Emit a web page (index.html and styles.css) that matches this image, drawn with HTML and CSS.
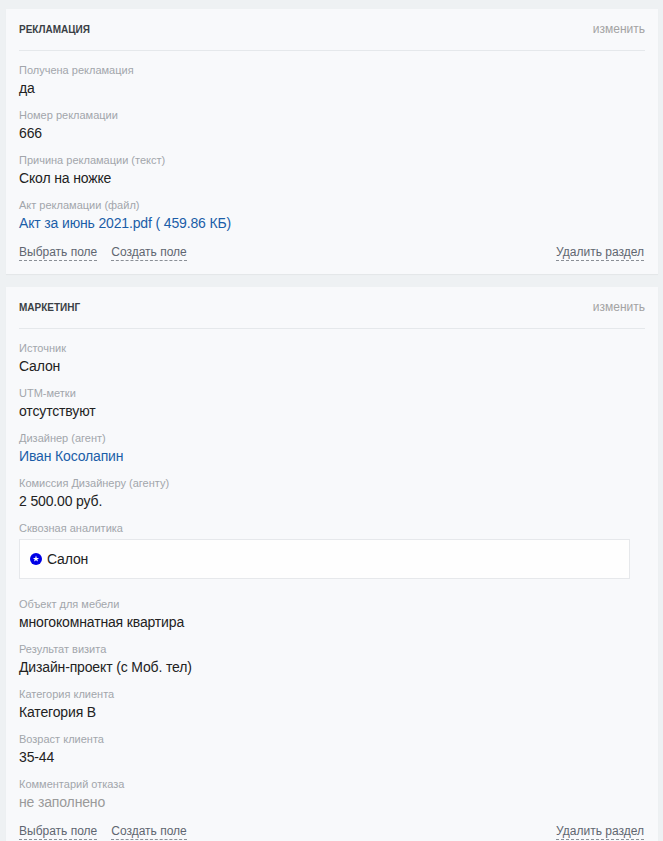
FILE: index.html
```html
<!DOCTYPE html>
<html>
<head lang="ru">
    <meta charset="UTF-8">
    <title>Карточка</title>
    <link rel="stylesheet" href="styles.css">
</head>
<body>
<div class="page">
    <!--рекламация-->
    <div class="card">
        <div class="card-head">
            <span class="card-title">Рекламация</span>
            <a class="edit">изменить</a>
        </div>
        <div class="fields">
            <div class="field">
                <div class="label">Получена рекламация</div>
                <div class="value">да</div>
            </div>
            <div class="field">
                <div class="label">Номер рекламации</div>
                <div class="value">666</div>
            </div>
            <div class="field">
                <div class="label">Причина рекламации (текст)</div>
                <div class="value">Скол на ножке</div>
            </div>
            <div class="field">
                <div class="label">Акт рекламации (файл)</div>
                <div class="value link">Акт за июнь 2021.pdf ( 459.86 КБ)</div>
            </div>
        </div>
        <div class="actions">
            <div class="actions-left">
                <a class="dashed">Выбрать поле</a>
                <a class="dashed">Создать поле</a>
            </div>
            <a class="dashed">Удалить раздел</a>
        </div>
    </div>

    <!--маркетинг-->
    <div class="card">
        <div class="card-head">
            <span class="card-title">Маркетинг</span>
            <a class="edit">изменить</a>
        </div>
        <div class="fields">
            <div class="field">
                <div class="label">Источник</div>
                <div class="value">Салон</div>
            </div>
            <div class="field">
                <div class="label">UTM-метки</div>
                <div class="value">отсутствуют</div>
            </div>
            <div class="field">
                <div class="label">Дизайнер (агент)</div>
                <div class="value link">Иван Косолапин</div>
            </div>
            <div class="field">
                <div class="label">Комиссия Дизайнеру (агенту)</div>
                <div class="value">2 500.00 руб.</div>
            </div>
            <div class="field field-box">
                <div class="label">Сквозная аналитика</div>
                <div class="source-box">
                    <svg class="source-icon" width="12" height="12" viewBox="0 0 12 12">
                        <circle cx="6" cy="6" r="6" fill="#0000e6"/>
                        <polygon points="6,2.6 6.8,4.9 9.2,4.9 7.3,6.3 8,8.6 6,7.2 4,8.6 4.7,6.3 2.8,4.9 5.2,4.9" fill="#fff"/>
                    </svg>
                    <span>Салон</span>
                </div>
            </div>
            <div class="field">
                <div class="label">Объект для мебели</div>
                <div class="value">многокомнатная квартира</div>
            </div>
            <div class="field">
                <div class="label">Результат визита</div>
                <div class="value">Дизайн-проект (с Моб. тел)</div>
            </div>
            <div class="field">
                <div class="label">Категория клиента</div>
                <div class="value">Категория B</div>
            </div>
            <div class="field">
                <div class="label">Возраст клиента</div>
                <div class="value">35-44</div>
            </div>
            <div class="field">
                <div class="label">Комментарий отказа</div>
                <div class="value empty">не заполнено</div>
            </div>
        </div>
        <div class="actions">
            <div class="actions-left">
                <a class="dashed">Выбрать поле</a>
                <a class="dashed">Создать поле</a>
            </div>
            <a class="dashed">Удалить раздел</a>
        </div>
    </div>
</div>
</body>
</html>
```

FILE: styles.css
```css
*{
    margin:0;
    padding:0;
    box-sizing:border-box;
}
body{
    background-color:#eef1f3;
    font-family:"Liberation Sans", Arial, sans-serif;
    color:#222;
}
.page{
    padding:9px 5px 0 6px;
}
.card{
    background-color:#f8f9fb;
    padding:0 13px 13px;
    margin-bottom:13px;
    box-shadow:0 1px 1px rgba(0,0,0,.04);
}
.card-head{
    height:42px;
    display:flex;
    justify-content:space-between;
    align-items:center;
    border-bottom:1px solid #e5e8eb;
    padding-bottom:1px;
}
.card-title{
    font-size:10px;
    font-weight:bold;
    text-transform:uppercase;
    color:#3a3f45;
}
.edit{
    font-size:12px;
    color:#a3a3a3;
    cursor:pointer;
}
.fields{
    padding-top:12px;
}
.field{
    margin-bottom:10px;
}
.label{
    font-size:11px;
    line-height:15px;
    color:#a2a6ab;
}
.value{
    font-size:14px;
    line-height:20px;
    letter-spacing:-0.15px;
    color:#222;
}
.value.link{
    color:#1b5ea8;
}
.value.empty{
    color:#9a9a9a;
}
.field-box{
    margin-bottom:18px;
}
.source-box{
    margin-top:3px;
    width:611px;
    height:40px;
    background-color:#fefefe;
    border:1px solid #e6e8eb;
    display:flex;
    align-items:center;
    padding-left:10px;
    font-size:14px;
    letter-spacing:-0.15px;
    color:#222;
}
.source-icon{
    margin-right:5px;
}
.actions{
    display:flex;
    justify-content:space-between;
    align-items:center;
    margin-top:12px;
    padding-right:1px;
}
.actions-left{
    display:flex;
    gap:14px;
}
.dashed{
    font-size:12px;
    line-height:15px;
    color:#5f6670;
    border-bottom:1px dashed #8a8f96;
    cursor:pointer;
}
```
